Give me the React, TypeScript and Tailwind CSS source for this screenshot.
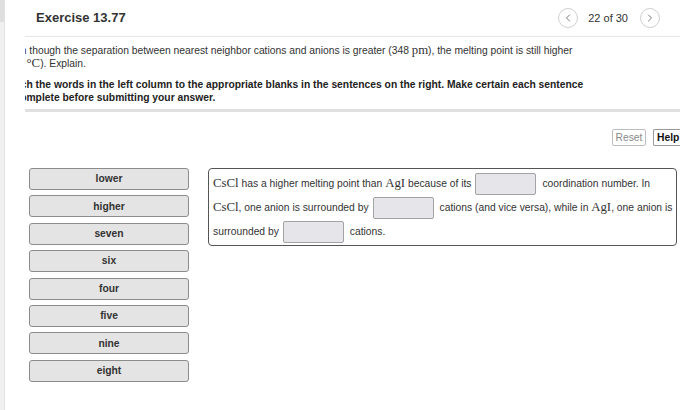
import React from 'react';
import { ChevronLeft, ChevronRight } from 'lucide-react';

const words = ['lower', 'higher', 'seven', 'six', 'four', 'five', 'nine', 'eight'];

const Math = ({ children }: { children: React.ReactNode }) => (
  <span className="font-['Liberation_Serif',serif] text-[12.8px]">{children}</span>
);

const Blank = () => (
  <span className="inline-block w-[61px] h-[22px] shrink-0 bg-[#e6e6ea] border border-[#a3a3a3] rounded-[2px] ml-[4px] mr-[6px]" />
);

const App = () => {
  return (
    <div className="w-[700px] h-[410px] flex bg-white overflow-hidden font-['Liberation_Sans',Arial,sans-serif] text-[#333]">
      {/* side rail */}
      <div className="w-[5px] flex flex-col bg-[#f0f0f0] border-r border-[#e2e2e2]">
        <div className="h-[22px] bg-[#dedede]" />
      </div>

      <div className="ml-[20px] w-[655px] overflow-hidden flex flex-col">
        {/* header */}
        <div className="h-[37px] shrink-0 flex items-center justify-between pl-[11px] pr-[20px] border-b border-[#e6e6e6]">
          <h1 className="text-[13px] font-bold text-[#333]">Exercise 13.77</h1>
          <div className="flex items-center">
            <button className="w-[20px] h-[20px] rounded-full border border-[#cfcfcf] flex items-center justify-center text-[#555]">
              <ChevronLeft size={12} strokeWidth={1.6} />
            </button>
            <span className="text-[11px] text-[#333] ml-[10px] mr-[12px]">22 of 30</span>
            <button className="w-[20px] h-[20px] rounded-full border border-[#cfcfcf] flex items-center justify-center text-[#555]">
              <ChevronRight size={12} strokeWidth={1.6} />
            </button>
          </div>
        </div>

        {/* problem text, scrolled a little to the right */}
        <div className="-ml-[22px] pt-[7px] text-[10.3px] leading-[13px] whitespace-nowrap">
          <div>
            Even though the separation between nearest neighbor cations and anions is greater (348{' '}
            <Math>pm</Math>), the melting point is still higher
          </div>
          <div>
            (558 <Math>°C</Math>). Explain.
          </div>
          <div className="mt-[8px] font-bold text-[#222]">
            <div>Match the words in the left column to the appropriate blanks in the sentences on the right. Make certain each sentence</div>
            <div>is complete before submitting your answer.</div>
          </div>
        </div>

        <div className="mt-[5px] h-[3px] shrink-0 bg-[#e0e0e0]" />

        {/* toolbar */}
        <div className="mt-[17px] flex justify-end">
          <button className="h-[17px] w-[34px] text-[10.3px] text-[#8a8a8a] border border-[#bdbdbd] rounded-[2px] bg-white">
            Reset
          </button>
          <button className="ml-[7px] h-[17px] pl-[3px] w-[27px] text-left text-[10.3px] font-bold text-[#111] border border-[#9a9a9a] border-r-0 rounded-l-[2px] bg-white">
            Help
          </button>
        </div>

        {/* matching area */}
        <div className="mt-[22px] flex items-start pl-[4px]">
          <div className="w-[160px] flex flex-col gap-[5.4px]">
            {words.map((w) => (
              <div
                key={w}
                className="h-[22px] flex items-center justify-center bg-[#e4e4e4] border border-[#8c8c8c] rounded-[3px] text-[10.3px] font-bold text-[#333]"
              >
                {w}
              </div>
            ))}
          </div>

          <div className="ml-[19px] w-[469px] h-[78px] border-[1.5px] border-[#555] rounded-[4px] pl-[4px] pt-[3px] text-[10.3px] text-[#333] whitespace-nowrap">
            <div className="h-[24px] flex items-center">
              <Math>CsCl</Math>
              <span>&nbsp;has a higher melting point than&nbsp;</span>
              <Math>AgI</Math>
              <span>&nbsp;because of its</span>
              <Blank />
              <span>coordination number. In</span>
            </div>
            <div className="h-[24px] flex items-center">
              <Math>CsCl</Math>
              <span>, one anion is surrounded by</span>
              <Blank />
              <span>cations (and vice versa), while in&nbsp;</span>
              <Math>AgI</Math>
              <span>, one anion is</span>
            </div>
            <div className="h-[24px] flex items-center">
              <span>surrounded by</span>
              <Blank />
              <span>cations.</span>
            </div>
          </div>
        </div>
      </div>
    </div>
  );
};

export default App;
